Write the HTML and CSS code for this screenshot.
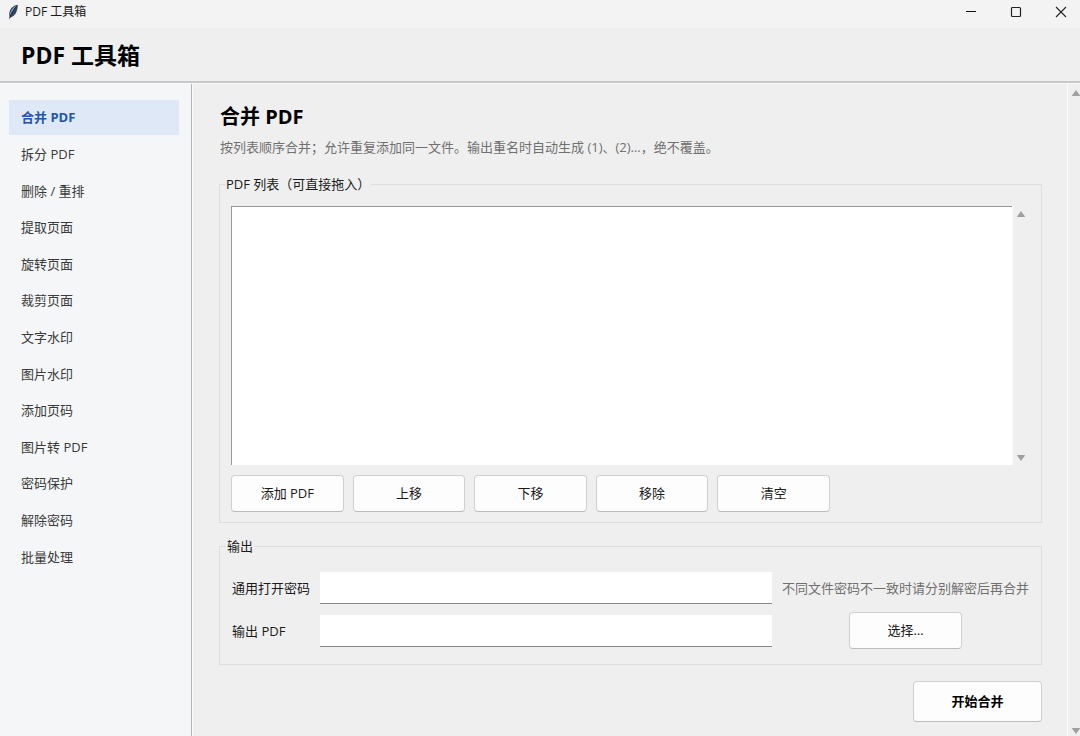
FILE: index.html
```html
<!DOCTYPE html>
<html lang="zh-CN">
<head>
  <meta charset="UTF-8" />
  <meta name="viewport" content="width=device-width, initial-scale=1.0"/>
  <title>PDF 工具箱</title>
  <link rel="stylesheet" href="styles.css">
</head>
<body>
  <div class="titlebar">
    <svg class="app-icon" width="12" height="17" viewBox="0 0 12 17" aria-hidden="true">
      <path d="M10.6 0.8C7.2 1 3.6 4 2.6 7.6C2.1 9.6 2.2 11.4 2.6 12.8L2 16.2L3.2 13.4C6 12.8 8.4 10.6 9.6 7.4C10.6 5 11 2.6 10.6 0.8Z" fill="#33455c"/>
      <path d="M9.4 1.6C6.6 3 4 6 3.2 9.4C3 10.4 3 11 3.2 11.8C4.4 8.4 6.8 4.8 9.4 1.6Z" fill="#86b0dc"/>
      <path d="M9.6 2.2C6.6 5.4 4 9.6 2.8 14" fill="none" stroke="#1c2530" stroke-width="0.8"/>
    </svg>
    <span class="window-title">PDF 工具箱</span>
    <div class="window-controls">
      <button type="button" aria-label="最小化">
        <svg width="12" height="12" viewBox="0 0 12 12"><path d="M1 5.5H11" stroke="#111" stroke-width="1"/></svg>
      </button>
      <button type="button" aria-label="最大化">
        <svg width="12" height="12" viewBox="0 0 12 12"><rect x="1.5" y="1.5" width="9" height="9" rx="1" fill="none" stroke="#222" stroke-width="1.2"/></svg>
      </button>
      <button type="button" aria-label="关闭">
        <svg width="12" height="12" viewBox="0 0 12 12"><path d="M1 1L11 11M11 1L1 11" stroke="#222" stroke-width="1.1"/></svg>
      </button>
    </div>
  </div>

  <header class="header">
    <h1>PDF 工具箱</h1>
  </header>

  <div class="layout">
    <nav class="sidebar">
      <ul>
        <li><a href="#merge" class="active">合并 PDF</a></li>
        <li><a href="#split">拆分 PDF</a></li>
        <li><a href="#reorder">删除 / 重排</a></li>
        <li><a href="#extract">提取页面</a></li>
        <li><a href="#rotate">旋转页面</a></li>
        <li><a href="#crop">裁剪页面</a></li>
        <li><a href="#text-mark">文字水印</a></li>
        <li><a href="#image-mark">图片水印</a></li>
        <li><a href="#numbers">添加页码</a></li>
        <li><a href="#images">图片转 PDF</a></li>
        <li><a href="#protect">密码保护</a></li>
        <li><a href="#unlock">解除密码</a></li>
        <li><a href="#batch">批量处理</a></li>
      </ul>
    </nav>

    <main class="content">
      <h2>合并 PDF</h2>
      <p class="description">按列表顺序合并；允许重复添加同一文件。输出重名时自动生成 (1)、(2)…，绝不覆盖。</p>

      <fieldset>
        <legend>PDF 列表（可直接拖入）</legend>
        <div class="list">
          <select class="file-list" size="12" multiple aria-label="PDF 列表"></select>
          <div class="scrollbar list-scroll">
            <svg width="10" height="8" viewBox="0 0 10 8"><path d="M5 1L9 6.5Q9 7 8.5 7H1.5Q1 7 1 6.5Z" fill="#a0a0a0"/></svg>
            <svg width="10" height="8" viewBox="0 0 10 8"><path d="M5 7L9 1.5Q9 1 8.5 1H1.5Q1 1 1 1.5Z" fill="#a0a0a0"/></svg>
          </div>
        </div>
        <div class="btn-group">
          <button type="button" class="btn">添加 PDF</button>
          <button type="button" class="btn">上移</button>
          <button type="button" class="btn">下移</button>
          <button type="button" class="btn">移除</button>
          <button type="button" class="btn">清空</button>
        </div>
      </fieldset>

      <fieldset class="output">
        <legend>输出</legend>
        <div class="form">
          <label for="password">通用打开密码</label>
          <input type="password" id="password">
          <span class="hint">不同文件密码不一致时请分别解密后再合并</span>

          <label for="output">输出 PDF</label>
          <input type="text" id="output">
          <button type="button" class="btn choose">选择…</button>
        </div>
      </fieldset>

      <div class="actions">
        <button type="button" class="btn primary">开始合并</button>
      </div>
    </main>

    <div class="scrollbar page-scroll">
      <svg width="10" height="8" viewBox="0 0 10 8"><path d="M5 1L9 6.5Q9 7 8.5 7H1.5Q1 7 1 6.5Z" fill="#a0a0a0"/></svg>
      <svg width="10" height="8" viewBox="0 0 10 8"><path d="M5 7L9 1.5Q9 1 8.5 1H1.5Q1 1 1 1.5Z" fill="#a0a0a0"/></svg>
    </div>
  </div>
</body>
</html>
```
FILE: styles.css
```css
* {
  box-sizing: border-box;
}

body {
  display: flex;
  flex-direction: column;
  min-height: 100vh;
  margin: 0;
  font-family: "Open Sans", "Noto Sans CJK SC", sans-serif;
  font-size: 13px;
  line-height: 20px;
  color: #1a1a1a;
  background: #efefef;
}

button, input, select {
  font: inherit;
  color: inherit;
}

/* window title bar */
.titlebar {
  display: flex;
  align-items: center;
  height: 28px;
  padding: 0 1px 4px 7px;
  background: #f3f3f3;
}

.window-title {
  margin-left: 6px;
  font-size: 12px;
}

.window-controls {
  display: flex;
  margin-left: auto;
}

.window-controls button {
  display: flex;
  align-items: center;
  justify-content: center;
  width: 45px;
  height: 24px;
  padding: 0 0 0 8px;
  border: none;
  background: none;
}

.header {
  padding: 12px 21px 11px;
  border-bottom: 2px solid #c8c8c8;
}

h1 {
  margin: 0;
  font-size: 23px;
  line-height: 30px;
  color: #000;
}

.layout {
  display: flex;
  flex: 1;
  border-top: 1px solid #fafafa;
}

/* sidebar */
.sidebar {
  width: 192px;
  padding: 16px 12px 16px 9px;
  background: #f4f6f8;
  border-right: 1px solid #b4b4b4;
}

.sidebar ul {
  display: grid;
  grid-auto-rows: 1fr;
  gap: 2px;
  height: 474px;
  margin: 0;
  padding: 0;
  list-style: none;
}

.sidebar a {
  display: flex;
  align-items: center;
  height: 100%;
  padding: 0 12px;
  color: #3a3a3a;
  text-decoration: none;
}

.sidebar a.active {
  font-weight: bold;
  color: #2456a6;
  background: #dfe8f7;
}

/* main panel */
.content {
  flex: 1;
  min-width: 0;
  padding: 19px 25px 14px 26px;
  border-left: 1px solid #fafafa;
}

h2 {
  margin: 0;
  padding-left: 1px;
  font-size: 20px;
  line-height: 28px;
  color: #000;
}

.description {
  margin: 6px 0 17px;
  padding-left: 1px;
  color: #707070;
}

fieldset {
  min-width: 0;
  margin: 0;
  padding: 12px 12px 10px 11px;
  border: 1px solid #dedede;
}

legend {
  margin-left: -6px;
  padding: 0 1px;
}

.list {
  display: flex;
}

.file-list {
  flex: 1;
  height: 259px;
  border: none;
  border-top: 1px solid #999;
  border-left: 1px solid #999;
  border-radius: 0;
  background: #fff;
  overflow: hidden;
}

.scrollbar {
  display: flex;
  flex-direction: column;
  justify-content: space-between;
  align-items: center;
  border-left: 1px solid #fafafa;
}

.list-scroll {
  width: 17px;
  padding: 4px 0 3px;
}

.page-scroll {
  width: 13px;
  padding: 5px 0 1px 4px;
}

.btn-group {
  display: grid;
  grid-template-columns: repeat(5, 1fr);
  gap: 9px;
  max-width: 599px;
  margin-top: 10px;
}

.btn {
  height: 37px;
  padding: 0 12px 2px;
  border: 1px solid #d0d0d0;
  border-bottom-color: #bcbcbc;
  border-radius: 4px;
  background: #fdfdfd;
}

.btn:hover {
  background: #f3f7fc;
}

.output {
  margin-top: 13px;
  padding: 16px 12px 15px;
}

.form {
  display: grid;
  grid-template-columns: auto 1fr auto;
  align-items: center;
  gap: 8px 10px;
}

.form input {
  width: 100%;
  height: 32px;
  padding: 0 8px;
  border: none;
  border-bottom: 1px solid #868686;
  background: #fff;
}

.hint {
  color: #707070;
}

.choose {
  justify-self: center;
  width: 113px;
}

.actions {
  display: flex;
  justify-content: flex-end;
  margin-top: 16px;
}

.primary {
  width: 129px;
  height: 41px;
  font-weight: bold;
  color: #000;
}
```
